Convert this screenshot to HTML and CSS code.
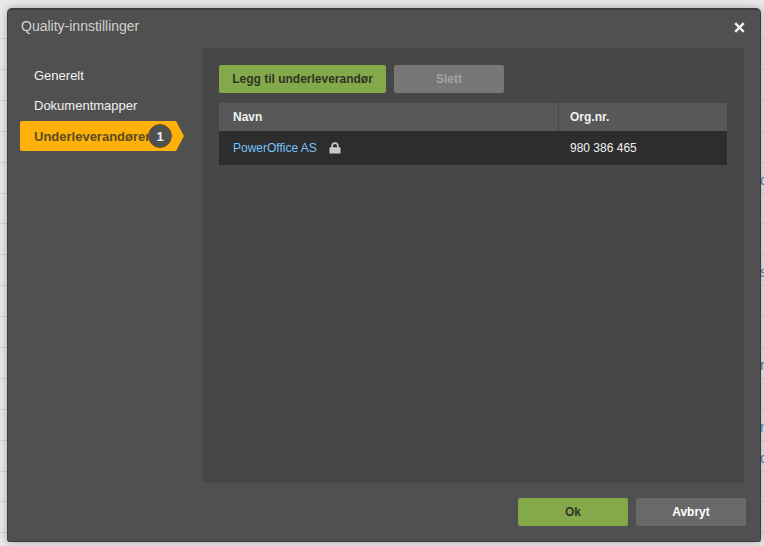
FILE: index.html
```html
<!DOCTYPE html>
<html lang="no">
<head>
<meta charset="utf-8">
<title>Quality-innstillinger</title>
<link rel="stylesheet" href="styles.css">
</head>
<body>
<div class="page">
  <div class="bg-row"></div>
  <div class="bg-row"></div>
  <div class="bg-row"></div>
  <div class="bg-row"></div>
  <div class="bg-row"></div>
  <div class="bg-row"><span class="frag">c</span></div>
  <div class="bg-row"></div>
  <div class="bg-row"></div>
  <div class="bg-row"><span class="frag">s</span></div>
  <div class="bg-row"></div>
  <div class="bg-row"></div>
  <div class="bg-row"><span class="frag">r</span></div>
  <div class="bg-row"></div>
  <div class="bg-row"><span class="frag frag-link">n</span></div>
  <div class="bg-row"><span class="frag">c</span></div>
  <div class="bg-row"></div>
  <div class="bg-row"></div>
  <div class="bg-row"></div>
</div>
<section class="dialog">
  <header class="dialog-head">
    <h1 class="dialog-title">Quality-innstillinger</h1>
    <svg class="close" width="11" height="11" viewBox="0 0 11 11" aria-label="Lukk"><path d="M1.2 1.2 9.8 9.8M9.8 1.2 1.2 9.8" fill="none" stroke="#f0f0f0" stroke-width="2.4"/></svg>
  </header>
  <div class="dialog-body">
    <nav class="nav">
      <a class="nav-item">Generelt</a>
      <a class="nav-item">Dokumentmapper</a>
      <a class="nav-item active">Underleverandører<span class="badge">1</span></a>
    </nav>
    <main class="panel">
      <div class="toolbar">
        <button class="btn btn-add">Legg til underleverandør</button>
        <button class="btn btn-del">Slett</button>
      </div>
      <div class="table">
        <div class="tr th">
          <div class="col-name">Navn</div>
          <div class="col-org">Org.nr.</div>
        </div>
        <div class="tr td">
          <div class="col-name"><a class="link">PowerOffice AS</a>
            <svg class="lock" width="12" height="12" viewBox="0 0 12 12"><path d="M1 5.200h1.300V3.900a3.700 3.700 0 0 1 7.400 0v1.300H11a.5.5 0 0 1 .5.5v5.300a.5.5 0 0 1-.5.5H1a.5.5 0 0 1-.5-.5V5.700a.5.5 0 0 1 .5-.5zM4 5.200h4V3.900a2 2 0 0 0-4 0z" fill="#c9c9c9" fill-rule="evenodd"/></svg>
          </div>
          <div class="col-org">980 386 465</div>
        </div>
      </div>
    </main>
  </div>
  <footer class="dialog-foot">
    <button class="btn btn-ok">Ok</button>
    <button class="btn btn-cancel">Avbryt</button>
  </footer>
</section>
</body>
</html>
```
FILE: styles.css
```css
* { box-sizing: border-box; }
html, body { margin: 0; height: 100%; overflow: hidden; }
body { background: #ebebeb; font-family: "Liberation Sans", Arial, sans-serif; font-size: 12px; }
.page { height: 546px; padding-top: 8.2px; overflow: hidden; }
.bg-row { height: 30.9px; border-bottom: 1px solid #d6d6d6; white-space: nowrap; padding-left: 760px; line-height: 34px; color: #4a7fb5; font-size: 14px; }
.frag-link { color: #2a9ad6; }
.dialog { position: absolute; left: 7px; top: 8px; width: 754px; height: 534px; background: #505050; border: 1px solid #3c3c3c; border-top: 2px solid #3e3e3e; border-radius: 5px 5px 3px 3px; box-shadow: 0 0 10px rgba(0,0,0,.3); display: flex; flex-direction: column; }
.dialog-head { height: 38px; padding: 7px 15px 0 13px; display: flex; justify-content: space-between; align-items: flex-start; flex: none; }
.dialog-title { margin: 0; font-size: 14px; font-weight: 400; line-height: 18px; color: #d2d2d2; }
.close { margin-top: 5px; }
.dialog-body { flex: 1; display: flex; min-height: 0; padding-left: 12px; }
.nav { width: 182px; padding-top: 13px; flex: none; }
.nav-item { display: flex; align-items: center; height: 30px; padding: 0 0 2px 14px; font-size: 13px; color: #f0f0f0; position: relative; }
.nav-item.active { width: 164px; padding-bottom: 0; background: #ffb10a; color: #5a4c22; font-weight: 700; border-radius: 2px 0 0 2px; clip-path: polygon(0 0, 156px 0, 164px 15px, 156px 30px, 0 30px); }
.badge { position: absolute; left: 128px; top: 3px; width: 24px; height: 24px; border-radius: 50%; background: #505050; border: 1px solid #6a5a2a; color: #eef2f6; font-weight: 700; font-size: 13px; display: flex; align-items: center; justify-content: center; }
.panel { width: 542px; height: 435px; background: #474747; border-radius: 2px; padding: 17px 17px 0; flex: none; }
.toolbar { display: flex; gap: 8px; }
.btn { height: 28px; border: 0; border-radius: 2px; font-family: inherit; font-size: 12px; font-weight: 700; padding: 0; }
.btn-add { width: 167px; background: #84a94a; color: #2f3526; }
.btn-del { width: 110px; background: #777; color: #a3a3a3; }
.table { margin-top: 10px; }
.tr { display: flex; font-size: 12px; }
.th { height: 28px; background: #585858; color: #f0f0f0; font-weight: 700; line-height: 28px; border-radius: 2px 2px 0 0; }
.td { height: 34px; background: #2d2d2d; color: #f0f0f0; line-height: 34px; }
.col-name { width: 340px; padding-left: 14px; display: flex; align-items: center; gap: 12px; }
.th .col-name { border-right: 1px solid #474747; }
.col-org { padding-left: 11px; }
.link { color: #74c3ff; }
.lock { flex: none; margin-top: -1px; }
.dialog-foot { height: 58px; flex: none; display: flex; justify-content: flex-end; gap: 8px; padding: 15px 14px 0 0; }
.btn-ok, .btn-cancel { width: 110px; }
.btn-ok { background: #84a94a; color: #2f3526; }
.btn-cancel { background: #696969; color: #fff; }
```
